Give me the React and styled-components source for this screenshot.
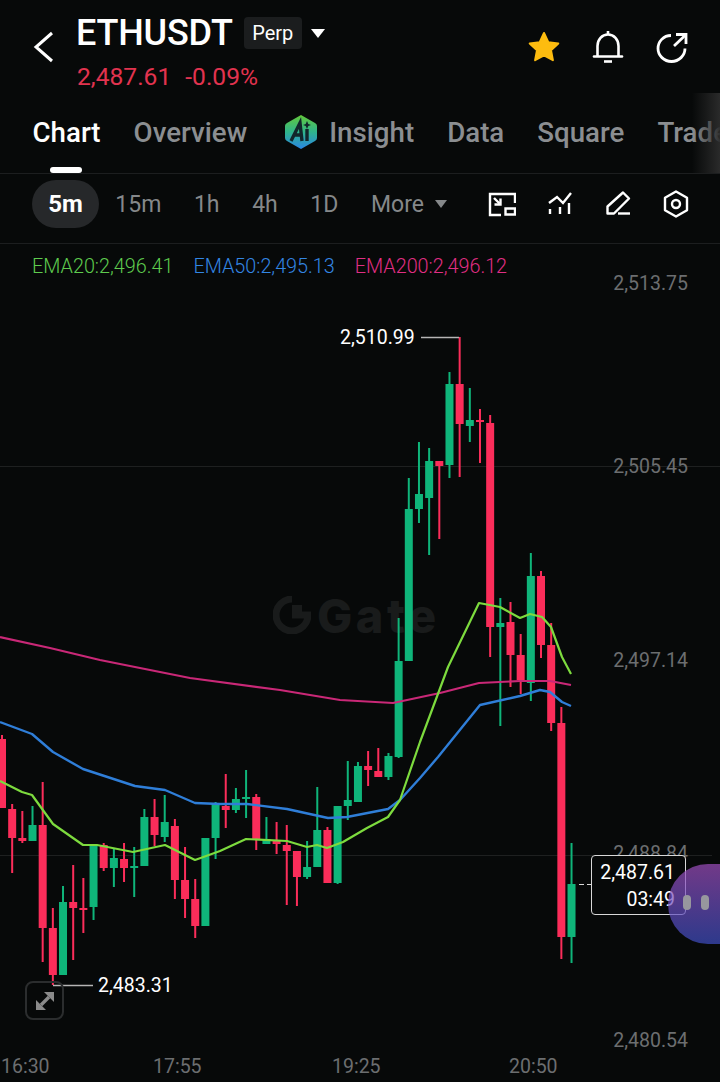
import React from 'react';
import styled, { createGlobalStyle } from 'styled-components';

const GlobalStyle = createGlobalStyle`
    html, body {
        margin: 0;
        padding: 0;
        background: #070909;
    }
    * {
        box-sizing: border-box;
    }
`;

const Page = styled.div`
    width: 720px;
    height: 1082px;
    display: flex;
    flex-direction: column;
    overflow: hidden;
    background: #070909;
    color: white;
    font-family: Roboto, "Liberation Sans", sans-serif;
`;

const Header = styled.header`
    height: 93px;
    flex-shrink: 0;
    display: flex;
    align-items: center;
    padding: 0 30px 0 33px;
`;

const BackIcon = styled.svg`
    width: 22px;
    height: 34px;
    margin-right: 21px;
    flex-shrink: 0;
`;

const TitleBlock = styled.div`
    display: flex;
    flex-direction: column;
    gap: 14px;
    margin-top: 15px;
`;

const TitleRow = styled.div`
    display: flex;
    align-items: center;
    height: 32px;
`;

const Symbol = styled.h1`
    margin: 0;
    font-size: 36px;
    font-weight: 500;
    letter-spacing: -0.2px;
`;

const Badge = styled.span`
    margin-left: 11px;
    width: 58px;
    height: 32px;
    display: flex;
    align-items: center;
    justify-content: center;
    border-radius: 4px;
    background: #1b1d1e;
    font-size: 20px;
`;

const Caret = styled.span`
    width: 0;
    height: 0;
    margin-left: ${(p) => p.$gap || 9}px;
    border-left: ${(p) => p.$size || 7}px solid transparent;
    border-right: ${(p) => p.$size || 7}px solid transparent;
    border-top: ${(p) => (p.$size || 7) + 2}px solid ${(p) => p.$color || 'white'};
`;

const PriceRow = styled.div`
    display: flex;
    gap: 14px;
    padding-left: 1px;
    font-size: 24.6px;
    color: #e2334f;
    line-height: 28px;
`;

const HeaderActions = styled.div`
    margin-left: auto;
    display: flex;
    gap: 28px;
`;

const HeaderIcon = styled.svg`
    width: 36px;
    height: 36px;
    display: block;
`;

const Tabs = styled.nav`
    position: relative;
    height: 81px;
    flex-shrink: 0;
    display: flex;
    align-items: center;
    gap: 33px;
    padding: 0 0 2px 32.5px;
    overflow: hidden;
    white-space: nowrap;
    border-bottom: 1px solid #1c1e1f;
`;

const Tab = styled.a`
    position: relative;
    display: flex;
    align-items: center;
    gap: 11px;
    flex-shrink: 0;
    margin-left: ${(p) => (p.$ai ? 4 : 0)}px;
    font-size: 27.7px;
    font-weight: 500;
    color: ${(p) => (p.$active ? 'white' : '#8b8e91')};
`;

const TabMarker = styled.span`
    position: absolute;
    left: 50px;
    bottom: 0;
    width: 32px;
    height: 6px;
    border-radius: 3px;
    background: white;
`;

const TabFade = styled.span`
    position: absolute;
    top: 0;
    right: 0;
    bottom: 0;
    width: 28px;
    background: linear-gradient(to right, rgba(44, 44, 44, 0), rgba(44, 44, 44, 0.95));
`;

const Toolbar = styled.div`
    height: 70px;
    flex-shrink: 0;
    display: flex;
    align-items: center;
    padding: 0 30px 9px 32px;
    border-bottom: 1px solid #1c1e1f;
`;

const Interval = styled.span`
    display: flex;
    align-items: center;
    justify-content: center;
    padding: ${(p) => (p.$active ? '0' : '0 16.3px')};
    width: ${(p) => (p.$active ? '67px' : 'auto')};
    height: 48px;
    border-radius: 24px;
    background: ${(p) => (p.$active ? '#26282a' : 'transparent')};
    color: ${(p) => (p.$active ? 'white' : '#85888a')};
    font-size: ${(p) => (p.$active ? 24 : 23)}px;
    font-weight: ${(p) => (p.$active ? 700 : 400)};
`;

const ToolIcons = styled.div`
    margin-left: auto;
    display: flex;
    gap: 30px;
`;

const ToolIcon = styled.svg`
    width: 28px;
    height: 28px;
    display: block;
`;

const ChartArea = styled.section`
    position: relative;
    flex: 1;
    overflow: hidden;
`;

const ChartCanvas = styled.svg`
    position: absolute;
    inset: 0;
    width: 720px;
    height: 838px;
`;

const Legend = styled.div`
    position: relative;
    display: flex;
    gap: 20px;
    padding: 10px 0 0 32px;
    font-size: 19.8px;
    line-height: 26px;
    font-weight: 300;
`;

const LegendItem = styled.span`
    color: ${(p) => p.$color};
`;

const Watermark = styled.div`
    position: absolute;
    left: 273px;
    top: 349px;
    display: flex;
    align-items: center;
    gap: 6px;
    height: 44px;
    color: #191b1b;
    font-family: Inter, sans-serif;
    font-size: 47px;
    font-weight: 800;
    letter-spacing: 3.5px;
`;

const AxisLabel = styled.span`
    position: absolute;
    right: 32px;
    top: ${(p) => p.$y - 244 - 12}px;
    font-size: 19.5px;
    line-height: 26px;
    color: #6c6e70;
`;

const TimeLabel = styled.span`
    position: absolute;
    left: ${(p) => p.$x}px;
    bottom: 2px;
    font-size: 19.5px;
    line-height: 26px;
    color: #6c6e70;
`;

const PriceTag = styled.span`
    position: absolute;
    left: ${(p) => p.$x}px;
    top: ${(p) => p.$y - 244 - 12}px;
    font-size: 19.5px;
    line-height: 26px;
    color: white;
`;

const LastPrice = styled.div`
    position: absolute;
    left: 591px;
    top: 611px;
    width: 95px;
    height: 60px;
    padding: 3px 10px 0 0;
    border: 1px solid #d8d8d8;
    border-radius: 4px;
    background: #070909;
    text-align: right;
    font-size: 19.5px;
    line-height: 27px;
`;

const ExpandButton = styled.button`
    position: absolute;
    left: 25px;
    top: 737px;
    width: 39px;
    height: 39px;
    padding: 0;
    display: flex;
    align-items: center;
    justify-content: center;
    background: transparent;
    border: 2px solid #2b2d2e;
    border-radius: 8px;
`;

const Bubble = styled.div`
    position: absolute;
    left: 668px;
    top: 620px;
    width: 90px;
    height: 80px;
    display: flex;
    align-items: center;
    gap: 10px;
    padding: 0 0 4px 15px;
    border-radius: 40px;
    background: linear-gradient(to bottom, rgba(159, 78, 190, 0.7), rgba(62, 78, 195, 0.7));
`;

const BubbleDot = styled.span`
    width: 8px;
    height: 15px;
    border-radius: 4px;
    background: #97979e;
`;

const UP = '#0fb57a';
const DOWN = '#fb2d5a';

// x index order, [bodyTop, bodyBottom, wickTop, wickBottom, up?]
const candles = [
    [739, 808, 735, 808, 0],
    [809, 838, 804, 873, 0],
    [838, 841, 811, 843, 0],
    [825, 841, 806, 841, 1],
    [825, 928, 782, 962, 0],
    [928, 975, 908, 985, 0],
    [902, 975, 886, 975, 1],
    [902, 908, 865, 960, 0],
    [908, 910, 878, 933, 0],
    [846, 907, 845, 920, 1],
    [845, 868, 843, 871, 0],
    [858, 868, 848, 887, 1],
    [859, 868, 843, 882, 0],
    [866, 868, 847, 897, 1],
    [817, 866, 809, 866, 1],
    [817, 835, 799, 846, 0],
    [822, 837, 795, 842, 1],
    [826, 880, 819, 899, 0],
    [880, 899, 847, 918, 0],
    [899, 926, 879, 938, 0],
    [838, 926, 838, 926, 1],
    [803, 838, 802, 859, 1],
    [806, 810, 774, 828, 0],
    [799, 810, 788, 813, 1],
    [797, 799, 770, 818, 1],
    [797, 839, 794, 850, 0],
    [839, 844, 817, 844, 1],
    [841, 844, 822, 854, 0],
    [845, 851, 825, 905, 0],
    [851, 877, 851, 906, 0],
    [867, 877, 841, 879, 1],
    [830, 867, 787, 867, 1],
    [830, 883, 827, 883, 0],
    [806, 883, 806, 884, 1],
    [800, 806, 761, 820, 1],
    [766, 802, 762, 802, 1],
    [766, 770, 751, 786, 0],
    [771, 777, 748, 777, 0],
    [756, 777, 753, 780, 1],
    [661, 757, 618, 758, 1],
    [509, 661, 478, 661, 1],
    [494, 509, 442, 523, 1],
    [461, 498, 448, 555, 1],
    [461, 466, 461, 539, 0],
    [384, 465, 372, 478, 1],
    [384, 424, 337, 477, 0],
    [420, 426, 388, 442, 1],
    [420, 422, 409, 463, 0],
    [423, 627, 415, 657, 0],
    [623, 627, 598, 726, 1],
    [622, 655, 602, 687, 0],
    [655, 680, 634, 694, 0],
    [576, 683, 553, 701, 1],
    [576, 645, 571, 658, 0],
    [645, 723, 623, 731, 0],
    [723, 937, 707, 959, 0],
    [884, 937, 843, 963, 1],
];

const ema20 = '0,781 22,792 32,795 53,824 83,845 97,845 133,852 165,845 195,860 220,851 246,839 287,841 307,847 317,845 327,848 343,842 367,828 388,817 400,800 420,742 448,667 479,603 500,607 520,618 530,614 542,617 551,627 562,657 571,674';
const ema50 = '0,722 32,734 53,752 83,769 135,786 165,790 195,803 220,804 247,804 287,809 328,818 347,817 388,809 400,800 420,778 438,757 480,705 520,696 540,690 550,692 562,702 571,706';
const ema200 = '0,637 50,648 100,660 190,678 280,690 340,700 393,703 440,693 479,683 520,681 550,681 571,685';

const App = () => {
    return (
        <Page>
            <GlobalStyle />
            <Header>
                <BackIcon viewBox="0 0 22 34" fill="none" stroke="white" strokeWidth="3">
                    <path d="M19 3 L3 17 L19 31" />
                </BackIcon>
                <TitleBlock>
                    <TitleRow>
                        <Symbol>ETHUSDT</Symbol>
                        <Badge>Perp</Badge>
                        <Caret />
                    </TitleRow>
                    <PriceRow>
                        <span>2,487.61</span>
                        <span>-0.09%</span>
                    </PriceRow>
                </TitleBlock>
                <HeaderActions>
                    <HeaderIcon viewBox="0 0 36 36">
                        <path
                            d="M18 4 L22.3 13.2 L32.3 14.4 L25 21.3 L26.9 31.2 L18 26.3 L9.1 31.2 L11 21.3 L3.7 14.4 L13.7 13.2 Z"
                            fill="#fdbc0f"
                            stroke="#fdbc0f"
                            strokeWidth="2"
                            strokeLinejoin="round"
                        />
                    </HeaderIcon>
                    <HeaderIcon viewBox="0 0 36 36" fill="none" stroke="white" strokeWidth="2.6">
                        <path d="M4 27.5 H32" strokeLinecap="round" />
                        <path d="M7.5 27 V17 C7.5 10.5 12 5.5 18 5.5 C24 5.5 28.5 10.5 28.5 17 V27" />
                        <path d="M18 2 V5" />
                        <path d="M14 32.5 H22" />
                    </HeaderIcon>
                    <HeaderIcon viewBox="0 0 36 36" fill="none" stroke="white" strokeWidth="2.8">
                        <path d="M17 6.5 C9.5 6.5 4 12.5 4 19.5 C4 26.5 10 32.5 17.5 32.5 C25 32.5 31 26.5 31 19.5" />
                        <path d="M20 17 L31 6.5" />
                        <path d="M22 5.5 H32 V15" />
                    </HeaderIcon>
                </HeaderActions>
            </Header>
            <Tabs>
                <Tab $active>Chart</Tab>
                <Tab>Overview</Tab>
                <Tab $ai>
                    <svg width="34" height="36" viewBox="0 0 34 36">
                        <defs>
                            <linearGradient id="aiFill" x1="0" y1="0" x2="0" y2="1">
                                <stop offset="0" stopColor="#63c93a" />
                                <stop offset="0.5" stopColor="#2fb48c" />
                                <stop offset="1" stopColor="#2a86e6" />
                            </linearGradient>
                        </defs>
                        <path
                            d="M17 1 L31 9 Q33 10 33 12 V24 Q33 26 31 27 L17 35 L3 27 Q1 26 1 24 V12 Q1 10 3 9 Z"
                            fill="url(#aiFill)"
                        />
                        <path d="M7 27 L16 9 L18 27 M10.5 21 H17" fill="none" stroke="#12262b" strokeWidth="3.4" />
                        <path d="M23 15 V27" stroke="#12262b" strokeWidth="3.4" />
                        <path d="M23 7 L24.3 10 L27 11 L24.3 12 L23 15 L21.7 12 L19 11 L21.7 10 Z" fill="#12262b" />
                    </svg>
                    Insight
                </Tab>
                <Tab>Data</Tab>
                <Tab>Square</Tab>
                <Tab>Trade</Tab>
                <TabMarker />
                <TabFade />
            </Tabs>
            <Toolbar>
                <Interval $active>5m</Interval>
                <Interval>15m</Interval>
                <Interval>1h</Interval>
                <Interval>4h</Interval>
                <Interval>1D</Interval>
                <Interval>More<Caret $size={6} $gap={11} $color="#85888a" /></Interval>
                <ToolIcons>
                    <ToolIcon viewBox="0 0 28 28" fill="none" stroke="white" strokeWidth="2.4">
                        <path d="M27 13 V4 H2 V25 H13" />
                        <path d="M17.5 18.5 H27 V24.5 H17.5 Z" />
                        <path d="M6 8 L11.5 13.5" />
                        <path d="M12.5 8.5 V14.5 H6.5" />
                    </ToolIcon>
                    <ToolIcon viewBox="0 0 28 28" fill="none" stroke="white" strokeWidth="2.4">
                        <path d="M3 13 L11 7 L17 13 L25 3" />
                        <path d="M4 19 V24 M14 17 V24 M23 13 V24" />
                    </ToolIcon>
                    <ToolIcon viewBox="0 0 28 28" fill="none" stroke="white" strokeWidth="2.4">
                        <path d="M3.5 23.5 V16.5 L19 2.5 L25 8.5 L10 23.5 Z" strokeLinejoin="round" />
                        <path d="M14 23.5 H26" />
                    </ToolIcon>
                    <ToolIcon viewBox="0 0 28 28" fill="none" stroke="white" strokeWidth="2.4">
                        <path d="M14 1.5 L25 7.8 V20.2 L14 26.5 L3 20.2 V7.8 Z" strokeLinejoin="round" />
                        <circle cx="14" cy="14" r="4" />
                    </ToolIcon>
                </ToolIcons>
            </Toolbar>
            <ChartArea>
                <Watermark>
                    <svg width="38" height="38" viewBox="0 0 38 38" fill="none">
                        <path d="M19 3 A16 16 0 1 0 35 19 H19" stroke="#191b1b" strokeWidth="7" />
                        <rect x="19" y="9" width="10" height="10" fill="#191b1b" />
                    </svg>
                    Gate
                </Watermark>
                <ChartCanvas viewBox="0 244 720 838">
                    <path d="M0 466.5 H720 M0 855.5 H712" stroke="#1e2020" strokeWidth="1" />
                    {candles.map(([top, bottom, high, low, up], i) => {
                        const x = 2 + i * 10.17;
                        const color = up ? UP : DOWN;
                        return (
                            <g key={i} fill={color}>
                                <rect x={x - 1} y={high} width="2" height={low - high} />
                                <rect x={x - 4} y={top} width="8" height={bottom - top} />
                            </g>
                        );
                    })}
                    <polyline points={ema200} fill="none" stroke="#c92877" strokeWidth="2.2" strokeLinejoin="round" />
                    <polyline points={ema50} fill="none" stroke="#2f7ed8" strokeWidth="2.4" strokeLinejoin="round" />
                    <polyline points={ema20} fill="none" stroke="#7ddb3e" strokeWidth="2.2" strokeLinejoin="round" />
                    <path d="M421 337.5 H459 M53 985.5 H93" stroke="#b5b5b5" strokeWidth="1.5" />
                    <path d="M579 884.5 H591" stroke="#d8d8d8" strokeWidth="1" strokeDasharray="5 3" />
                </ChartCanvas>
                <Legend>
                    <LegendItem $color="#5ecb4e">EMA20:2,496.41</LegendItem>
                    <LegendItem $color="#3386e4">EMA50:2,495.13</LegendItem>
                    <LegendItem $color="#e02e84">EMA200:2,496.12</LegendItem>
                </Legend>
                <AxisLabel $y={283}>2,513.75</AxisLabel>
                <AxisLabel $y={466}>2,505.45</AxisLabel>
                <AxisLabel $y={660}>2,497.14</AxisLabel>
                <AxisLabel $y={853}>2,488.84</AxisLabel>
                <AxisLabel $y={1040}>2,480.54</AxisLabel>
                <TimeLabel $x={1}>16:30</TimeLabel>
                <TimeLabel $x={153}>17:55</TimeLabel>
                <TimeLabel $x={332}>19:25</TimeLabel>
                <TimeLabel $x={509}>20:50</TimeLabel>
                <PriceTag $x={340} $y={337}>2,510.99</PriceTag>
                <PriceTag $x={98} $y={985}>2,483.31</PriceTag>
                <LastPrice>
                    2,487.61
                    <br />
                    03:49
                </LastPrice>
                <ExpandButton aria-label="Fullscreen">
                    <svg width="20" height="20" viewBox="0 0 20 20" fill="#8a8a8a">
                        <path d="M9 1 H19 V11 Z" />
                        <path d="M11 19 H1 V9 Z" />
                        <path d="M6 14 L14 6" stroke="#8a8a8a" strokeWidth="3.4" />
                    </svg>
                </ExpandButton>
                <Bubble>
                    <BubbleDot />
                    <BubbleDot />
                </Bubble>
            </ChartArea>
        </Page>
    );
};

export default App;
